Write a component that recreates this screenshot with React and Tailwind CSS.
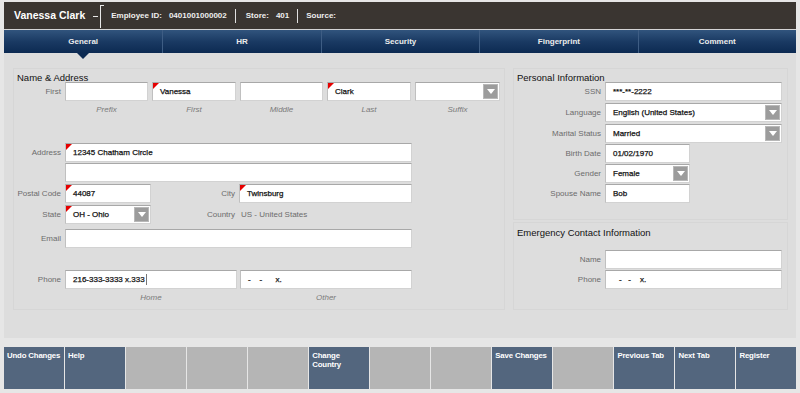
import React from "react";

const FONT = "font-['Liberation_Sans',Arial,Helvetica,sans-serif]";

function Req() {
  return (
    <span className="absolute top-0 left-0 w-0 h-0 border-t-[6px] border-t-[#e60000] border-r-[6px] border-r-transparent" />
  );
}

function Drop() {
  return (
    <span className="absolute right-[1px] top-[1px] bottom-[1px] w-[15px] bg-[#9c9c9c] border border-[#b8b8b8] flex items-center justify-center">
      <span className="w-0 h-0 border-l-[4px] border-l-transparent border-r-[4px] border-r-transparent border-t-[5px] border-t-white" />
    </span>
  );
}

function Box({ cls, v, req, dd, pre, caret }) {
  return (
    <div
      className={`relative h-[19px] bg-white border border-[#d2d2d2] border-t-[#a8a8a8] border-l-[#c0c0c0] flex items-center pl-[7px] text-[8px] text-[#111] [-webkit-text-stroke:0.25px_#111] ${cls}`}
    >
      {req && <Req />}
      <span className={pre ? "whitespace-pre" : "whitespace-nowrap"}>{v}</span>
      {caret && <span className="ml-[1px] w-[1px] h-[11px] bg-[#777]" />}
      {dd && <Drop />}
    </div>
  );
}

function Label({ cls, children }) {
  return (
    <div className={`h-[19px] leading-[19px] text-right text-[8px] text-[#6c6c6c] whitespace-nowrap ${cls}`}>
      {children}
    </div>
  );
}

function Sub({ cls, children }) {
  return (
    <div className={`h-[16px] pt-[2px] leading-[14px] text-center italic text-[8px] text-[#7a7a7a] ${cls}`}>
      {children}
    </div>
  );
}

const tabs = ["General", "HR", "Security", "Fingerprint", "Comment"];

const buttons = [
  "Undo Changes",
  "Help",
  "",
  "",
  "",
  "Change Country",
  "",
  "",
  "Save Changes",
  "",
  "Previous Tab",
  "Next Tab",
  "Register",
];

export default function App() {
  return (
    <div className={`${FONT} w-[800px] h-[393px] bg-[#e6e6e6] pt-[2px] px-[4px] flex flex-col overflow-hidden`}>
      {/* Header */}
      <div className="h-[28px] bg-[#3a3531] border-b border-[#d4d4d4] flex items-center pl-[10px] text-white">
        <span className="text-[10.5px] font-bold">Vanessa Clark</span>
        <svg width="14" height="24" viewBox="0 0 14 24" className="ml-[8px]">
          <line x1="0" y1="12.5" x2="5" y2="12.5" stroke="#e8e8e8" strokeWidth="1" />
          <line x1="7.5" y1="1" x2="7.5" y2="24" stroke="#e8e8e8" strokeWidth="1" />
          <line x1="7.5" y1="1.5" x2="11" y2="1.5" stroke="#e8e8e8" strokeWidth="1" />
        </svg>
        <span className="ml-[4px] text-[8px] font-bold text-[#eeeeee]">Employee ID:</span>
        <span className="ml-[7px] text-[8px] font-bold text-[#eeeeee]">0401001000002</span>
        <span className="ml-[8px] w-[1px] h-[14px] bg-[#e0e0e0]" />
        <span className="ml-[10px] text-[8px] font-bold text-[#eeeeee]">Store:</span>
        <span className="ml-[7px] text-[8px] font-bold text-[#eeeeee]">401</span>
        <span className="ml-[8px] w-[1px] h-[14px] bg-[#e0e0e0]" />
        <span className="ml-[8px] text-[8px] font-bold text-[#eeeeee]">Source:</span>
      </div>

      {/* Tabs */}
      <div className="relative h-[23px] grid grid-cols-5 bg-gradient-to-b from-[#31547d] via-[#1a3a63] to-[#0c2a52]">
        {tabs.map((t, i) => (
          <div
            key={t}
            className={`relative flex items-center justify-center text-[8px] font-bold text-[#ececec] ${i > 0 ? "border-l border-[#3e5d84]" : ""}`}
          >
            {t}
            {i === 0 && (
              <span className="absolute left-1/2 -translate-x-1/2 top-full w-0 h-0 border-l-[6px] border-l-transparent border-r-[6px] border-r-transparent border-t-[6px] border-t-[#0c2a52] z-10" />
            )}
          </div>
        ))}
      </div>

      {/* Content */}
      <div className="h-[285px] bg-[#dddddd] flex pt-[15px] pl-[9px]">
        {/* Left panel */}
        <div className="w-[492px] h-[242px] border border-[#d6d6d6] flex flex-col pt-[2px]">
          <div className="h-[13px] leading-[13px] mb-[-2px] pl-[3px] text-[9.5px] text-[#111]">Name &amp; Address</div>
          <div className="flex">
            <Label cls="w-[47px]">First</Label>
            <div className="ml-[4px] flex gap-[4px]">
              <Box cls="w-[83px]" v="" />
              <Box cls="w-[84px]" v="Vanessa" req />
              <Box cls="w-[83px]" v="" />
              <Box cls="w-[84px]" v="Clark" req />
              <Box cls="w-[85px]" v="" dd />
            </div>
          </div>
          <div className="ml-[51px] flex gap-[4px]">
            <Sub cls="w-[83px]">Prefix</Sub>
            <Sub cls="w-[84px]">First</Sub>
            <Sub cls="w-[83px]">Middle</Sub>
            <Sub cls="w-[84px]">Last</Sub>
            <Sub cls="w-[85px]">Suffix</Sub>
          </div>

          <div className="flex mt-[26px]">
            <Label cls="w-[47px]">Address</Label>
            <Box cls="ml-[4px] w-[347px]" v="12345 Chatham Circle" req />
          </div>
          <div className="flex mt-[1px]">
            <Label cls="w-[47px]"></Label>
            <Box cls="ml-[4px] w-[347px]" v="" />
          </div>
          <div className="flex mt-[2px]">
            <Label cls="w-[47px]">Postal Code</Label>
            <Box cls="ml-[4px] w-[86px]" v="44087" req />
            <Label cls="w-[84px]">City</Label>
            <Box cls="ml-[4px] w-[173px]" v="Twinsburg" req />
          </div>
          <div className="flex mt-[2px]">
            <Label cls="w-[47px]">State</Label>
            <Box cls="ml-[4px] w-[86px]" v="OH - Ohio" req dd />
            <Label cls="w-[84px]">Country</Label>
            <div className="ml-[6px] h-[19px] leading-[19px] text-[8px] text-[#6c6c6c]">US - United States</div>
          </div>
          <div className="flex mt-[5px]">
            <Label cls="w-[47px]">Email</Label>
            <Box cls="ml-[4px] w-[347px]" v="" />
          </div>
          <div className="flex mt-[22px]">
            <Label cls="w-[47px]">Phone</Label>
            <Box cls="ml-[4px] w-[172px]" v="216-333-3333 x.333" caret />
            <Box cls="ml-[3px] w-[172px]" v={"-    -      x."} pre />
          </div>
          <div className="ml-[51px] flex gap-[3px]">
            <Sub cls="w-[172px]">Home</Sub>
            <Sub cls="w-[172px]">Other</Sub>
          </div>
        </div>

        {/* Right column */}
        <div className="ml-[8px] w-[275px] flex flex-col">
          <div className="h-[152px] border border-[#d6d6d6] flex flex-col pt-[2px]">
            <div className="h-[13px] leading-[13px] mb-[-2px] pl-[3px] text-[9.5px] text-[#111]">Personal Information</div>
            <div className="flex">
              <Label cls="w-[87px]">SSN</Label>
              <Box cls="ml-[4px] w-[177px]" v="***-**-2222" />
            </div>
            <div className="flex mt-[2px]">
              <Label cls="w-[87px]">Language</Label>
              <Box cls="ml-[4px] w-[177px]" v="English (United States)" dd />
            </div>
            <div className="flex mt-[2px]">
              <Label cls="w-[87px]">Marital Status</Label>
              <Box cls="ml-[4px] w-[177px]" v="Married" dd />
            </div>
            <div className="flex mt-[1px]">
              <Label cls="w-[87px]">Birth Date</Label>
              <Box cls="ml-[4px] w-[85px]" v="01/02/1970" />
            </div>
            <div className="flex mt-[1px]">
              <Label cls="w-[87px]">Gender</Label>
              <Box cls="ml-[4px] w-[85px]" v="Female" dd />
            </div>
            <div className="flex mt-[1px]">
              <Label cls="w-[87px]">Spouse Name</Label>
              <Box cls="ml-[4px] w-[85px]" v="Bob" />
            </div>
          </div>

          <div className="mt-[2px] h-[88px] border border-[#d6d6d6] flex flex-col pt-[3px]">
            <div className="h-[13px] leading-[13px] pl-[3px] text-[9.5px] text-[#111]">Emergency Contact Information</div>
            <div className="flex mt-[11px]">
              <Label cls="w-[87px]">Name</Label>
              <Box cls="ml-[4px] w-[177px]" v="" />
            </div>
            <div className="flex mt-[1px]">
              <Label cls="w-[87px]">Phone</Label>
              <Box cls="ml-[4px] w-[177px] pl-[13px]" v={"-   -    x."} pre />
            </div>
          </div>
        </div>
      </div>

      {/* Buttons */}
      <div className="mt-[9px] h-[42px] grid grid-cols-[repeat(13,minmax(0,1fr))] gap-[1.5px]">
        {buttons.map((b, i) => (
          <div
            key={i}
            className={`${b ? "bg-[#53667e]" : "bg-[#b5b5b5]"} pl-[3px] pr-0 pt-[4px] text-[7.8px] leading-[9px] tracking-[-0.15px] font-bold text-white`}
          >
            {b}
          </div>
        ))}
      </div>
    </div>
  );
}
